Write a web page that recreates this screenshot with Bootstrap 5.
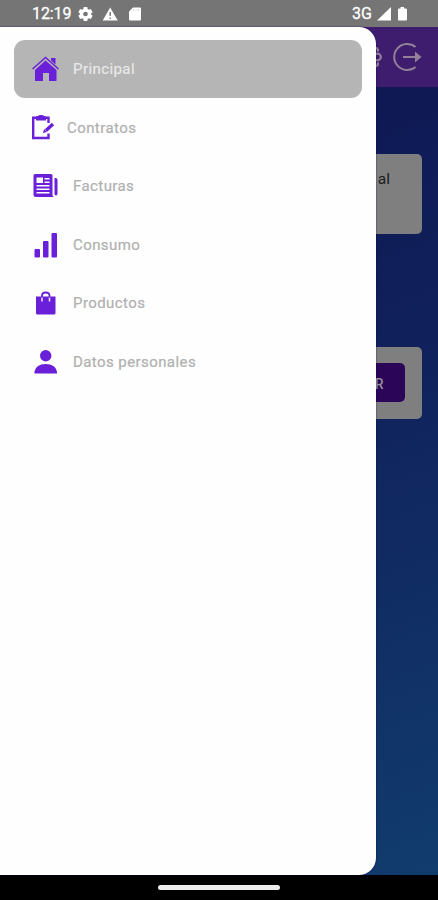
<!DOCTYPE html>
<html lang="es">
<head>
<meta charset="utf-8">
<meta name="viewport" content="width=device-width, initial-scale=1">
<title>Menú principal</title>
<link href="https://cdn.jsdelivr.net/npm/bootstrap@5.3.0/dist/css/bootstrap.min.css" rel="stylesheet">
<style>
body{font-family:Roboto,"Liberation Sans",sans-serif;background:#000}
.phone{width:438px;height:900px}
.status-bar{height:26.5px;background:#757575;color:#fff;font-size:16px;line-height:26px;padding:2px 29px 0 32px;-webkit-text-stroke:.3px #fff}
.status-bar .clock{width:46px;letter-spacing:-.1px}
.screen{height:848px;background:linear-gradient(160deg,#0e1450 0%,#10205a 45%,#113c6e 100%)}
.app-bar{height:60px;background:#3e1c6e;padding-right:15px}
.panel{background:#7f7f7f;border-radius:5px;width:406px;margin:0 16px 0 auto}
.panel-top{height:80.5px;margin-top:67px;padding:15px 32px 0 0;color:#1c1c1c;font-size:15.5px;line-height:20px}
.panel-action{height:72px;margin-top:112.5px;padding-right:17px}
.panel-action .btn{background:#2b0658;color:#949099;width:180px;height:39px;border-radius:5px;font-size:14px;font-weight:500;line-height:1;padding:2px 21.5px 0 0;border:0}
.drawer{width:376px;background:#fefefe;border-radius:0 17px 17px 0;padding:13px 14px;box-shadow:0 0 1.5px #08005c}
.drawer .nav-link{height:58.6px;border-radius:11px;padding:0 0 0 17px;color:#b0b0b0;font-size:15px;letter-spacing:.42px;-webkit-text-stroke:.2px currentColor}
.drawer .nav-link.active{background:#b5b5b5;color:#e8e8e8}
.drawer .nav-link span{padding-top:1px}
.drawer svg{width:30px;height:30px;color:#6a1fd8;margin-right:12px}
.drawer .tight svg{margin-right:6px}
.home-bar{height:25.5px}
.home-pill{width:122px;height:5px;background:#ececec}
</style>
</head>
<body>
<div class="phone d-flex flex-column overflow-hidden">
  <header class="status-bar d-flex align-items-center flex-shrink-0">
    <span class="clock">12:19</span>
    <svg width="15" height="14" viewBox="0 0 24 24" fill="#fff"><path fill-rule="evenodd" d="M9 0h6l.7 3.400 2.200 1.300L21.200 3.600l3 5.200-2.600 2.200v2l2.600 2.200-3 5.200-3.300-1.100-2.200 1.300L15 24H9l-.7-3.400-2.200-1.300-3.300 1.100-3-5.200L2.400 13v-2L-.2 8.800l3-5.200 3.300 1.100 2.200-1.300zM12 8a4 4 0 1 0 0 8 4 4 0 0 0 0-8z"/></svg>
    <svg class="ms-2" width="18" height="14" viewBox="0 0 18 14"><path fill="#fff" d="M9.200 .5 16.700 13.500H1.700z"/><path stroke="#757575" stroke-width="1.400" d="M9.200 5v4M9.200 10.500v1.500"/></svg>
    <svg class="ms-2" width="15" height="14" viewBox="0 0 15 14"><path fill="#fff" d="M6 .5h7q1 0 1 1v11q0 1-1 1H3q-1 0-1-1V4.500z"/><path stroke="#d0d0d0" stroke-width=".8" d="M6.500 2v2M9 2v2M11.500 2v2"/></svg>
    <span class="ms-auto">3G</span>
    <svg class="ms-1" width="16" height="14" viewBox="0 0 16 14"><path fill="#fff" d="M15 0v13.500H1z"/></svg>
    <svg class="ms-1" width="13" height="14" viewBox="0 0 13 14"><path fill="#fff" d="M4.500 0h3.500v1.500h1.500q1.500 0 1.500 1v10q0 1-1 1H3q-1 0-1-1v-10q0-1 1-1h1.500z"/></svg>
  </header>
  <main class="screen position-relative flex-shrink-0">
    <div class="app-bar d-flex align-items-center justify-content-end">
      <svg width="26" height="28" viewBox="0 0 26 28" fill="none" stroke="#918097" stroke-width="2.200"><path d="M12 5h3q2 0 2 3.500M12 23h3q2 0 2-3.500"/><circle cx="16.500" cy="14" r="3.300"/></svg>
      <svg class="ms-1" width="32" height="32" viewBox="0 0 32 32" fill="none" stroke="#918097" stroke-width="2"><path d="M24.500 6A13 13 0 1 0 24.500 26M12 16h15"/><path fill="#918097" stroke="none" d="M24 10.500 30.500 16 24 21.500z"/></svg>
    </div>
    <section class="panel panel-top text-end">al</section>
    <section class="panel panel-action d-flex align-items-center justify-content-end"><button class="btn text-end" type="button">R</button></section>
    <nav class="drawer nav flex-column flex-nowrap position-absolute top-0 start-0 h-100" aria-label="Menú">
      <a class="nav-link active d-flex align-items-center" href="#"><svg viewBox="0 0 30 30"><path fill="none" stroke="currentColor" stroke-width="1.500" d="M1.500 15 14.500 3.500 27.500 15"/><path fill="currentColor" d="M14.500 6.500 25.500 16V27h-7.500v-8h-6v8H4V16zM20 4h4.500v6.500L20 6.500z"/></svg><span>Principal</span></a>
      <a class="nav-link tight d-flex align-items-center" href="#"><svg viewBox="0 0 30 30"><path fill="none" stroke="currentColor" stroke-width="2.400" d="M17.500 11V5.700H2.200V26h15.300v-4.500"/><path fill="currentColor" d="M5 5q0-1 2-1 0-1 3-1t3 1q2 0 2 1v3.500H5z"/><path stroke="currentColor" stroke-width="3.400" d="m15 18.500 7-6.500"/><path fill="currentColor" d="m13 17 3 3-4 1z"/></svg><span>Contratos</span></a>
      <a class="nav-link d-flex align-items-center" href="#"><svg viewBox="0 0 30 30"><path fill="currentColor" fill-rule="evenodd" d="M4 3h16q1.500 0 1.500 1.500V24q0 1.500 1.500 2H5q-2.500 0-2.500-2.500v-19Q2.500 3 4 3zm1.500 3.500V12H12V6.500zm8 .5v1.500h5V7zm0 3.500V12h5v-1.500zM5.500 14v1.500h13V14zm0 3.500V19h13v-1.500zm0 3.500v1.500h13V21z"/><path fill="currentColor" d="M23.500 7h1q2 0 2 2v13.500q0 2-1.500 2t-1.500-2z"/></svg><span>Facturas</span></a>
      <a class="nav-link d-flex align-items-center" href="#"><svg viewBox="0 0 30 30" fill="currentColor"><rect x="3.500" y="19" width="5.500" height="8.500" rx="1"/><rect x="12" y="11" width="5.500" height="16.500" rx="1"/><rect x="20.500" y="3" width="5.500" height="24.500" rx="1"/></svg><span>Consumo</span></a>
      <a class="nav-link d-flex align-items-center" href="#"><svg viewBox="0 0 30 30"><path fill="currentColor" d="M5 8.500h19.500V25q0 1.500-1.500 1.500H6.500Q5 26.500 5 25z"/><path fill="none" stroke="currentColor" stroke-width="1.800" d="M11 9V7.500Q11 4.500 14.700 4.500T18.500 7.500V9"/><path stroke="#eadfff" stroke-width="1.600" d="M11 9.500v4M18.500 9.500v4"/></svg><span>Productos</span></a>
      <a class="nav-link d-flex align-items-center" href="#"><svg viewBox="0 0 30 30" fill="currentColor"><circle cx="14.700" cy="8.700" r="5.700"/><path d="M3.500 26.500v-2Q5 17 14.700 17T26 24.500v2z"/></svg><span>Datos personales</span></a>
    </nav>
  </main>
  <footer class="home-bar d-flex align-items-center justify-content-center flex-shrink-0"><span class="home-pill rounded-pill"></span></footer>
</div>
<script src="https://cdn.jsdelivr.net/npm/bootstrap@5.3.0/dist/js/bootstrap.bundle.min.js"></script>
</body>
</html>
